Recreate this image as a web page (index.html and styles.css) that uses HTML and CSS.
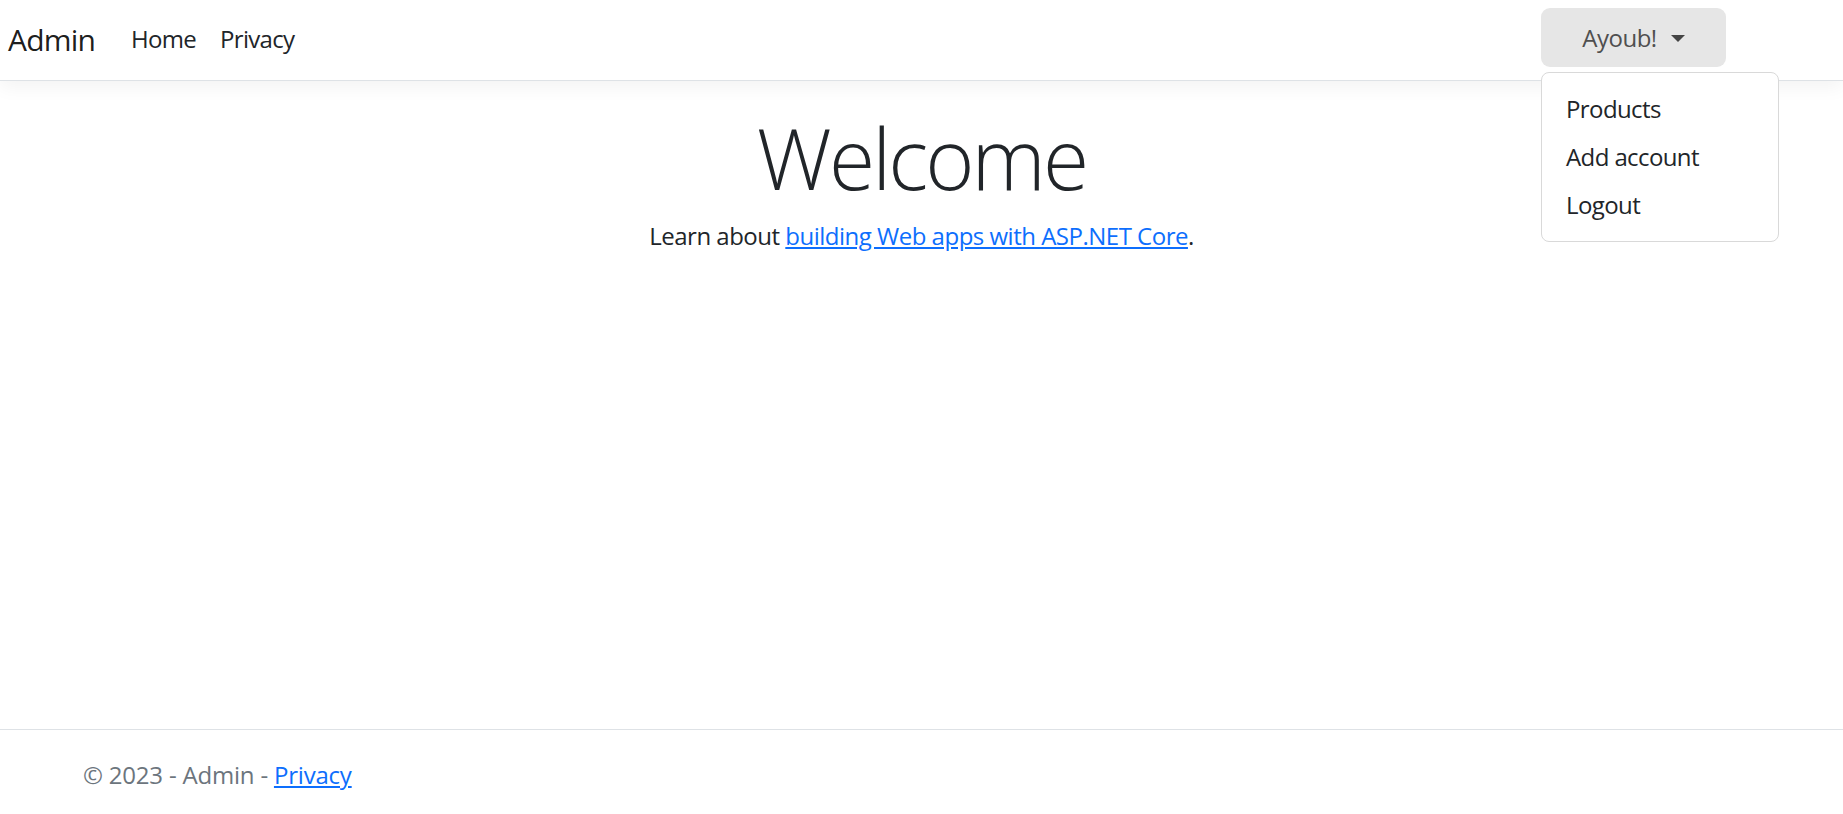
FILE: index.html
```html
<!DOCTYPE html>
<html lang="en">
<head>
<meta charset="utf-8">
<title>Home Page - Admin</title>
<link rel="stylesheet" href="styles.css">
</head>
<body>
<div class="page">
  <header class="navbar">
    <a class="brand" href="#">Admin</a>
    <ul class="nav">
      <li><a class="nav-link" href="#">Home</a></li>
      <li><a class="nav-link" href="#">Privacy</a></li>
    </ul>
    <div class="dropdown">
      <button class="dropdown-toggle" type="button">Ayoub!<span class="caret"></span></button>
      <ul class="dropdown-menu">
        <li><a class="dropdown-item" href="#">Products</a></li>
        <li><a class="dropdown-item" href="#">Add account</a></li>
        <li><a class="dropdown-item" href="#">Logout</a></li>
      </ul>
    </div>
  </header>
  <main class="main">
    <div class="text-center">
      <h1 class="display">Welcome</h1>
      <p class="lead-text">Learn about <a href="#">building Web apps with ASP.NET Core</a>.</p>
    </div>
  </main>
  <footer class="footer">
    <div class="footer-inner">&copy; 2023 - Admin - <a href="#">Privacy</a></div>
  </footer>
</div>
</body>
</html>
```

FILE: styles.css
```css
* { box-sizing: border-box; }
html, body {
  margin: 0;
  padding: 0;
  height: 100%;
  overflow: hidden;
  background: #fff;
}
body {
  font-family: "Open Sans", "Noto Sans", sans-serif;
  font-size: 24px;
  line-height: 1.5;
  color: #212529;
  letter-spacing: -0.5px;
}
a { color: #0d6efd; }

.page {
  display: flex;
  flex-direction: column;
}

.navbar {
  height: 81px;
  border-bottom: 1px solid #dee2e6;
  box-shadow: 0 6px 18px rgba(0, 0, 0, 0.05);
  display: flex;
  align-items: center;
  padding: 0 117px 2px 8px;
  position: relative;
  z-index: 2;
  background: #fff;
}
.brand {
  font-size: 30px;
  line-height: 45px;
  letter-spacing: -0.8px;
  color: rgba(0, 0, 0, 0.9);
  text-decoration: none;
  margin-right: 24px;
}
.nav {
  list-style: none;
  margin: 0;
  padding: 0;
  display: flex;
  flex: 1;
}
.nav-link {
  display: block;
  padding: 0 12px;
  line-height: 36px;
  letter-spacing: -0.7px;
  color: #212529;
  text-decoration: none;
}

.dropdown {
  position: relative;
  align-self: flex-start;
  margin-top: 8px;
}
.dropdown-toggle {
  font-family: inherit;
  font-size: 24px;
  letter-spacing: -0.5px;
  height: 59px;
  width: 185px;
  line-height: 59px;
  padding: 0;
  border: 0;
  border-radius: 9px;
  background: #e6e6e6;
  color: #4f4f4f;
  display: flex;
  align-items: center;
  justify-content: center;
}
.caret {
  display: inline-block;
  width: 0;
  height: 0;
  margin-left: 14px;
  margin-top: 2px;
  border-top: 7px solid #444;
  border-left: 7px solid transparent;
  border-right: 7px solid transparent;
}
.dropdown-menu {
  position: absolute;
  top: 64px;
  left: 0;
  width: 238px;
  margin: 0;
  padding: 12px 0;
  list-style: none;
  background: #fff;
  border: 1px solid #d9d9d9;
  border-radius: 8px;
}
.dropdown-item {
  display: block;
  padding: 6px 24px;
  line-height: 36px;
  letter-spacing: -0.6px;
  color: #212529;
  text-decoration: none;
  white-space: nowrap;
}

.main {
  height: 648px;
  padding-top: 27px;
}
.text-center { text-align: center; }
.display {
  font-size: 84px;
  font-weight: 300;
  letter-spacing: -2.9px;
  line-height: 100px;
  margin: 0 0 10px;
}
.lead-text {
  margin: 0;
  line-height: 36px;
}

.footer {
  border-top: 1px solid #dee2e6;
  line-height: 90px;
  color: #6c757d;
  white-space: nowrap;
  letter-spacing: -0.2px;
}
.footer-inner {
  padding-left: 83px;
}
```
